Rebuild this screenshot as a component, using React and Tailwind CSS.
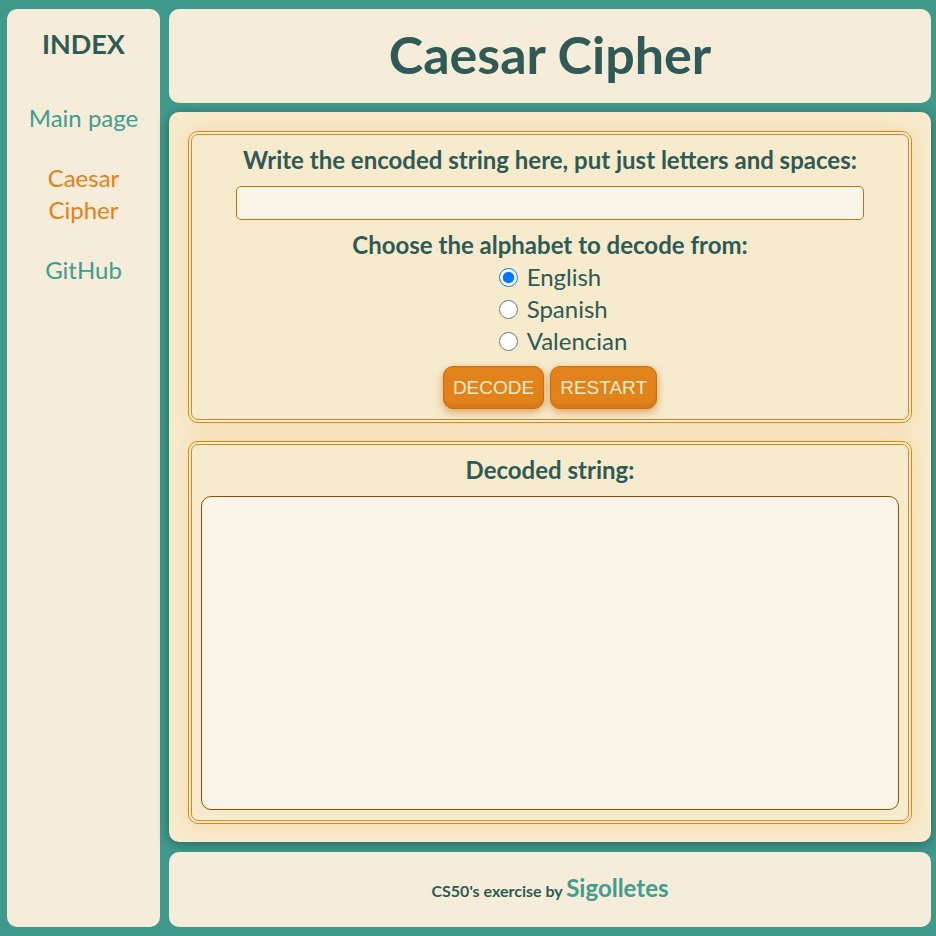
const alphabets = ["English", "Spanish", "Valencian"];

const panel = "rounded-[10px] border-4 border-double border-[#e2851b] p-[9px] pb-[10px] bg-[#f7ebce] shadow-[0_0_20px_rgba(250,190,100,0.4)]";
const heading = "text-center text-2xl leading-8 font-bold";
const button =
  "h-[43px] rounded-[10px] border border-[#c96f0e] bg-[#e2821b] px-[9px] pt-px font-['Liberation_Sans',Arial,sans-serif] text-[19px] text-[#faebcd] shadow-[inset_0_-4px_2px_#d97917,0_3px_8px_rgba(200,110,15,0.6)]";

export default function App() {
  return (
    <div className="flex min-h-screen gap-[9px] bg-[#409a8b] py-[9px] pr-[5px] pl-[7px] font-[Lato,'Open_Sans',sans-serif] text-[#2f5a55]">
      <nav className="w-[153px] shrink-0 rounded-[10px] bg-[#f5ecd9] px-4 pt-[15px] text-center text-2xl leading-8">
        <h2 className="mb-[38px] text-[27px] leading-10 font-bold">INDEX</h2>
        <ul className="flex flex-col gap-7">
          <li><a href="#main" className="text-[#429d8e]">Main page</a></li>
          <li><a href="#caesar" className="text-[#e2821b]">Caesar Cipher</a></li>
          <li><a href="#github" className="text-[#429d8e]">GitHub</a></li>
        </ul>
      </nav>
      <div className="flex min-w-0 flex-1 flex-col">
        <header className="mb-[9px] flex h-[94px] items-center justify-center rounded-[10px] bg-[#f5ecd9] pb-1">
          <h1 className="text-[52px] leading-[72px] font-bold">Caesar Cipher</h1>
        </header>
        <main className="mb-[10px] flex flex-1 flex-col gap-[18px] rounded-[10px] bg-[#f7ebce] px-[19px] pt-[19px] pb-[18px] shadow-[0_2px_12px_rgba(30,80,75,0.7)]">
          <form className={panel} onSubmit={(e) => e.preventDefault()}>
            <label htmlFor="encoded" className={`block ${heading}`}>
              Write the encoded string here, put just letters and spaces:
            </label>
            <input
              id="encoded"
              type="text"
              className="mx-auto mt-[10px] mb-[9px] block h-[34px] w-[90%] rounded-[5px] border border-[#c96f0e] bg-[#faf5e9] px-2"
            />
            <fieldset>
              <legend className={`w-full ${heading}`}>Choose the alphabet to decode from:</legend>
              <div className="mx-auto w-fit pl-[26px]">
                {alphabets.map((name, i) => (
                  <label key={name} className="flex items-center gap-[9px] text-2xl leading-8">
                    <input type="radio" name="alphabet" defaultChecked={i === 0} className="size-[19px]" />
                    {name}
                  </label>
                ))}
              </div>
            </fieldset>
            <div className="mt-[9px] flex justify-center gap-[6px]">
              <button type="submit" className={button}>DECODE</button>
              <button type="reset" className={button}>RESTART</button>
            </div>
          </form>
          <section className={`flex flex-1 flex-col ${panel}`}>
            <label htmlFor="decoded" className={heading}>Decoded string:</label>
            <textarea
              id="decoded"
              readOnly
              className="mt-[10px] w-full flex-1 resize-none rounded-[10px] border border-[#944d08] bg-[#faf5e9] p-2"
            />
          </section>
        </main>
        <footer className="flex h-[75px] items-center justify-center rounded-[10px] bg-[#f5ecd9] font-bold">
          <p className="text-base leading-8">
            CS50's exercise by <a href="#sigolletes" className="text-2xl leading-8 text-[#429d8e]">Sigolletes</a>
          </p>
        </footer>
      </div>
    </div>
  );
}
